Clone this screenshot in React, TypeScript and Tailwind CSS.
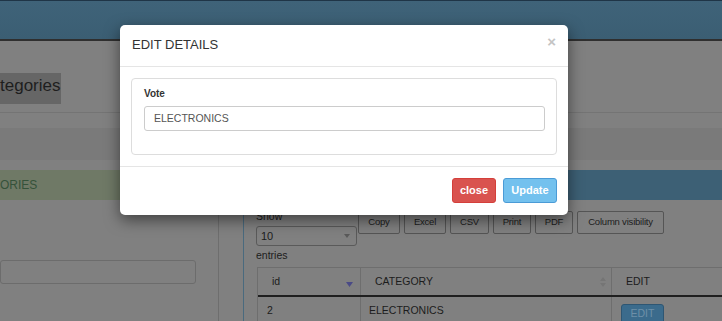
import React from "react";

export default function App() {
  const font = { fontFamily: '"Liberation Sans", Arial, sans-serif' };
  return (
    <div
      className="relative w-[722px] h-[321px] overflow-hidden bg-[#808080] text-[#1c1c1c]"
      style={font}
    >
      {/* navbar */}
      <div className="h-[41px] border-t border-t-[#1f3547] border-b-2 border-b-[#2f2f2f] bg-gradient-to-b from-[#3f6379] to-[#3b5e73]" />

      {/* page heading */}
      <div className="h-[71px] pt-[32px]">
        <span className="inline-block h-[31px] leading-[25px] pb-[6px] text-[17px] bg-[#666666] pr-[1px] text-[#1e1e1e]">
          tegories
        </span>
      </div>
      <div className="h-px bg-[#747474]" />
      <div className="h-[15px]" />
      <div className="h-[32px] bg-[#7a7a7a]" />

      {/* lower content */}
      <div className="flex pt-[10px]">
        {/* left column */}
        <div className="w-[220px] shrink-0">
          <div className="h-[30px] bg-[#6f7966] text-[#35523a] text-[12px] leading-[30px]">
            ORIES
          </div>
          <div className="flex">
            <div className="w-[219px] border-r border-r-[#6e6e6e] h-[130px] pt-[60px]">
              <div className="w-[196px] h-[24px] border border-[#6c6c6c] rounded-[3px]" />
            </div>
          </div>
        </div>
        <div className="w-[23px] shrink-0" />
        {/* right panel */}
        <div className="flex-1 border-l border-l-[#4a6a7e]">
          <div className="h-[30px] bg-[#3d6075]" />
          <div className="pl-[12px]">
            <div className="flex items-start">
              <div className="w-[102px] shrink-0 text-[10.5px]">
                <div className="h-[14px] leading-[14px] mt-[9px]">Show</div>
                <div className="mt-[3px] w-[101px] h-[20px] border border-[#5a5a5a] rounded-[3px] flex items-center justify-between pl-[4px] pr-[6px]">
                  <span className="text-[11px]">10</span>
                  <svg width="6" height="4" viewBox="0 0 6 4">
                    <path d="M0 0h6L3 4z" fill="#5a5a5a" />
                  </svg>
                </div>
                <div className="h-[14px] leading-[14px] mt-[2px]">entries</div>
              </div>
              <div className="flex gap-[4px] mt-[11px] text-[9.5px] tracking-[-0.2px]">
                {[
                  ["Copy", "w-[42px]"],
                  ["Excel", "w-[42px]"],
                  ["CSV", "w-[39px]"],
                  ["Print", "w-[38px]"],
                  ["PDF", "w-[38px]"],
                  ["Column visibility", "w-[87px]"],
                ].map(([t, w]) => (
                  <div
                    key={t}
                    className={`${w} h-[23px] border border-[#555555] rounded-[2px] flex items-center justify-center`}
                  >
                    {t}
                  </div>
                ))}
              </div>
            </div>
            {/* table */}
            <div className="mt-[5px] ml-[1px] border-l border-t border-[#6e6e6e] text-[10.5px]">
              <div className="flex h-[29px] border-b-2 border-b-[#1f1f1f]">
                <div className="w-[103px] border-r border-r-[#6e6e6e] flex items-center justify-between pl-[14px] pr-[7px]">
                  <span>id</span>
                  <svg width="7" height="5" viewBox="0 0 7 5" className="mt-[6px]">
                    <path d="M0 0h7L3.5 5z" fill="#4a4a86" />
                  </svg>
                </div>
                <div className="w-[251px] border-r border-r-[#6e6e6e] flex items-center justify-between pl-[14px] pr-[5px]">
                  <span>CATEGORY</span>
                  <svg width="6" height="10" viewBox="0 0 6 10">
                    <path d="M0 4h6L3 0z M0 6h6L3 10z" fill="#757575" />
                  </svg>
                </div>
                <div className="flex-1 flex items-center pl-[14px]">EDIT</div>
              </div>
              <div className="flex h-[30px]">
                <div className="w-[103px] border-r border-r-[#6e6e6e] pl-[9px] pt-[6px]">2</div>
                <div className="w-[251px] border-r border-r-[#6e6e6e] pl-[8px] pt-[6px]">ELECTRONICS</div>
                <div className="flex-1 pl-[9px] pt-[7px]">
                  <div className="w-[43px] h-[20px] bg-[#3b6b8c] border border-[#2e5673] rounded-[3px] flex items-center justify-center text-[#6e90a8] text-[10.5px]">
                    EDIT
                  </div>
                </div>
              </div>
            </div>
          </div>
        </div>
      </div>

      {/* modal */}
      <div className="absolute left-[120px] top-[25px] w-[448px] h-[190px] bg-white rounded-[5px] shadow-[0_5px_15px_rgba(0,0,0,0.5)] flex flex-col">
        <div className="h-[42px] border-b border-b-[#e5e5e5] flex items-center justify-between pl-[12px] pr-[12px]">
          <span className="text-[13px] text-[#333333] mt-[-1px]">EDIT DETAILS</span>
          <span className="text-[15px] font-bold text-[#c4c4c4] leading-none mt-[-8px]">×</span>
        </div>
        <div className="h-[99px] px-[11px] pt-[11px]">
          <div className="h-[77px] border border-[#dddddd] rounded-[4px] px-[12px] pt-[8px]">
            <div className="text-[10px] font-bold text-[#333333] h-[14px] leading-[14px]">Vote</div>
            <div className="mt-[5px] w-[401px] h-[25px] border border-[#cccccc] rounded-[3px] flex items-center pl-[9px] text-[10.5px] text-[#555555]">
              ELECTRONICS
            </div>
          </div>
        </div>
        <div className="flex-1 border-t border-t-[#e5e5e5] flex justify-end items-start pt-[11px] pr-[11px] gap-[7px]">
          <div className="w-[44px] h-[25px] bg-[#d9534f] border border-[#d43f3a] rounded-[3px] flex items-center justify-center text-white font-bold text-[11px]">
            close
          </div>
          <div className="w-[54px] h-[25px] bg-[#73c1ee] border border-[#4b9bd6] rounded-[3px] flex items-center justify-center text-white font-bold text-[11px]">
            Update
          </div>
        </div>
      </div>
    </div>
  );
}
